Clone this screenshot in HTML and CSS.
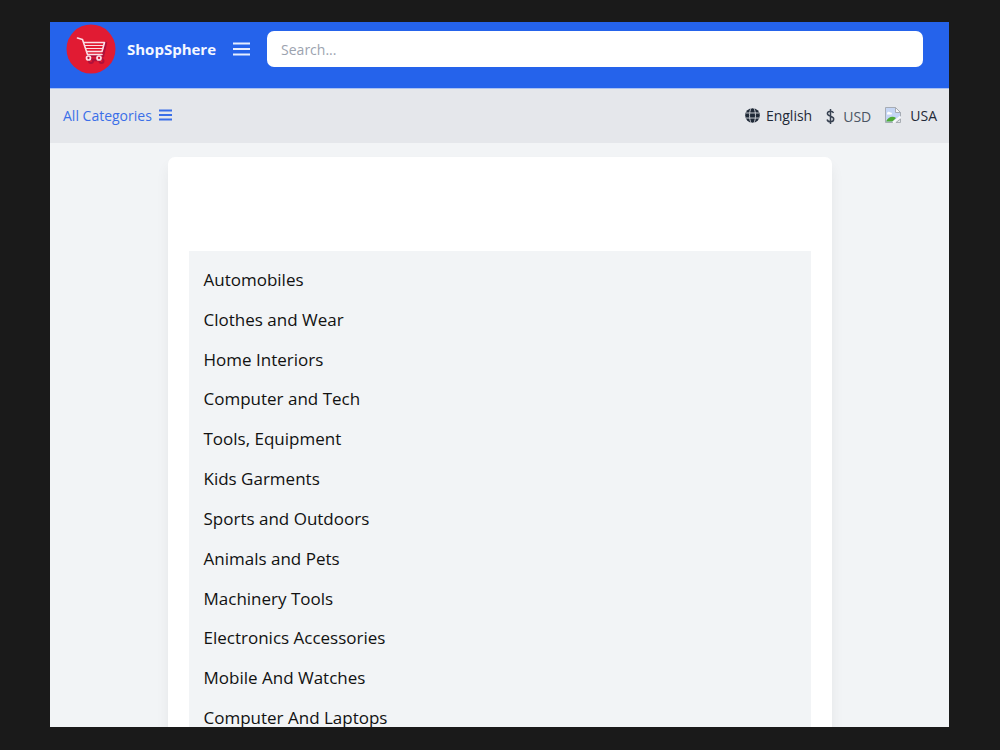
FILE: index.html
```html
<!DOCTYPE html>
<html lang="en">
<head>
<meta charset="utf-8">
<title>ShopSphere</title>
<link rel="stylesheet" href="styles.css">
</head>
<body>
<div class="app">
  <header class="topbar">
    <a class="brand" href="#">
      <svg class="logo" viewBox="0 0 50 50" aria-hidden="true">
        <circle cx="25" cy="25" r="24.5" fill="#e11b33"/>
        <path d="M40 18l-3 14H22l1 4h14" fill="none" stroke="#b0103a" stroke-width="2.500"/>
        <g fill="#e11b33" stroke="#b0103a" stroke-width="2"><circle cx="25" cy="37" r="2"/><circle cx="35.500" cy="37" r="2"/></g>
        <g fill="none" stroke="#fbdfe5" stroke-linecap="round" stroke-linejoin="round">
          <path stroke-width="1.6" d="M11.500 14l5 1.500L21.500 30.500H36"/>
          <path stroke-width="1.6" d="M18 18.500H38.500L36 27.500H21"/>
          <path stroke-width="1.2" d="M19 21.500H37.500M20 24.500H36.800"/>
          <circle stroke-width="1.7" cx="22.500" cy="34" r="2"/>
          <circle stroke-width="1.7" cx="33" cy="34" r="2"/>
        </g>
      </svg>
      <span>ShopSphere</span>
    </a>
    <button class="menu-button" type="button" aria-label="Open menu">
      <svg width="17" height="14" viewBox="0 0 17 14" aria-hidden="true"><path d="M0 1.500h17M0 7h17M0 12.500h17" stroke="#e6edff" stroke-width="1.900"/></svg>
    </button>
    <input class="search" type="search" placeholder="Search..." aria-label="Search">
  </header>
  <nav class="subbar">
    <button class="categories-button" type="button">All Categories
      <svg width="13" height="12" viewBox="0 0 13 12" aria-hidden="true"><path d="M0 1.500h13M0 6h13M0 10.500h13" stroke="currentColor" stroke-width="1.900"/></svg>
    </button>
    <div class="settings">
      <button class="setting" type="button">
        <svg width="15" height="15" viewBox="0 0 16 16" aria-hidden="true"><circle cx="8" cy="8" r="7.800" fill="#1f2937"/><path d="M.8 5.300h14.400M.8 10.700h14.400M6.500 0C4.300 4 4.300 12 6.500 16M9.500 0C11.700 4 11.700 12 9.500 16" fill="none" stroke="#d3d6dc" stroke-width="1"/></svg>
        <span>English</span>
      </button>
      <button class="setting currency" type="button">
        <svg width="9" height="17" viewBox="0 0 9 17" aria-hidden="true"><path d="M7.500 5C7 3.800 5.900 3.200 4.500 3.200C2.600 3.200 1.400 4.200 1.400 5.600C1.400 9 7.700 7.600 7.700 11C7.700 12.800 6.300 13.800 4.500 13.800C2.700 13.800 1.500 13 1.100 11.500M4.500 1V16" fill="none" stroke="#374151" stroke-width="1.500"/></svg>
        <span>USD</span>
      </button>
      <button class="setting country" type="button">
        <svg width="16" height="16" viewBox="0 0 16 16" aria-hidden="true">
          <path d="M.5.5h10l5 5v5L9 15.500H.5z" fill="#c5d6f5"/>
          <path d="M2 6.500C2 4.500 4.500 4 5.200 5.500C7 5 7.500 7 6.500 7.500H2z" fill="#fff"/>
          <path d="M1 14.500C3 9.500 8 8.500 11 11L7.500 14.500z" fill="#4eaa35"/>
          <path d="M10.500.5v5h5z" fill="#f5f6f7"/>
          <path d="M8 15.500H.5V.5h10l5 5v4M10.500.5v5h5M11 15.500h4.500V12z" fill="none" stroke="#a0a6ad" stroke-width=".9"/>
          <path d="M8 15.500L15.500 9.500" stroke="#f7f8fa" stroke-width="2"/>
        </svg>
        <span>USA</span>
      </button>
    </div>
  </nav>
  <main class="page">
    <section class="card">
      <ul class="category-list">
        <li>Automobiles</li>
        <li>Clothes and Wear</li>
        <li>Home Interiors</li>
        <li>Computer and Tech</li>
        <li>Tools, Equipment</li>
        <li>Kids Garments</li>
        <li>Sports and Outdoors</li>
        <li>Animals and Pets</li>
        <li>Machinery Tools</li>
        <li>Electronics Accessories</li>
        <li>Mobile And Watches</li>
        <li>Computer And Laptops</li>
      </ul>
    </section>
  </main>
</div>
</body>
</html>
```
FILE: styles.css
```css
* { box-sizing: border-box; }
body {
  margin: 0;
  height: 100vh;
  padding: 22px 51px 23px 50px;
  background: #1a1a1a;
  color: #111;
  font-family: "Open Sans", "Noto Sans", sans-serif;
  overflow: hidden;
}
button {
  border: 0;
  padding: 0;
  background: none;
  font: inherit;
  color: inherit;
  cursor: pointer;
}
svg { flex: none; display: block; }
.app {
  height: 100%;
  display: flex;
  flex-direction: column;
  background: #f2f4f6;
  overflow: hidden;
}
.topbar {
  flex: none;
  display: flex;
  align-items: center;
  gap: 17px;
  padding: 2px 26px 14px 16px;
  border-bottom: 1px solid #a9c0f2;
  background: #2563eb;
}
.brand {
  display: flex;
  align-items: center;
  gap: 11px;
  color: #f4f7ff;
  font-size: 15px;
  font-weight: 700;
  text-decoration: none;
}
.logo { width: 50px; height: 50px; }
.search {
  flex: 1;
  min-width: 0;
  height: 36px;
  padding: 0 14px;
  border: 0;
  border-radius: 7px;
  background: #fff;
  font: inherit;
  font-size: 14px;
  appearance: none;
}
.search::placeholder { color: #9ca3af; opacity: 1; }
.subbar {
  flex: none;
  display: flex;
  align-items: center;
  justify-content: space-between;
  height: 54px;
  padding: 0 12px 2px 13px;
  background: #e5e7eb;
  font-size: 14px;
}
.categories-button {
  display: flex;
  align-items: center;
  gap: 7px;
  color: #3b6fe8;
}
.settings { display: flex; gap: 14px; }
.setting {
  display: flex;
  align-items: center;
  gap: 6px;
  color: #1f2937;
}
.currency { gap: 8px; padding-top: 2px; color: #4b5563; }
.country { gap: 9px; }
.page { flex: 1; min-height: 0; padding: 14px; }
.card {
  max-width: 664px;
  margin: 0 auto;
  padding: 94px 21px 22px;
  border-radius: 7px;
  background: #fff;
  box-shadow: 0 9px 14px rgba(0, 0, 0, 0.06);
}
.category-list {
  display: grid;
  grid-auto-rows: 1fr;
  align-items: center;
  min-height: 496px;
  margin: 0;
  padding: 9px 15px;
  background: #f2f4f6;
  list-style: none;
  font-size: 17px;
  line-height: 24px;
}
```
